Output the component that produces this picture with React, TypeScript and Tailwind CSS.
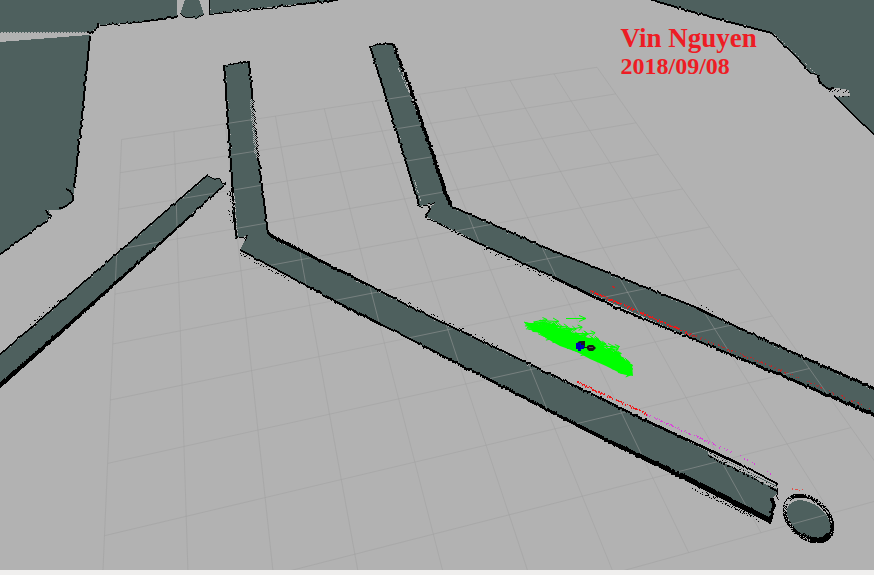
type Point = [number, number];

function makeRandom(seed: number) {
  let s = seed;
  return () => {
    s = (s * 1664525 + 1013904223) % 4294967296;
    return s / 4294967296;
  };
}

const cell = (x: number, y: number, w = 1, h = 1) => `M${x} ${y}h${w}v${h}h${-w}z`;

const poly = (points: Point[]) => points.map((p) => p.join(",")).join(" ");

/* Walks along a polyline and lays down one run of map cells per step. */
function walk(points: Point[], visit: (x: number, y: number, steep: boolean, t: number) => void) {
  const total = points.length - 1;
  for (let i = 0; i < total; i++) {
    const [x0, y0] = points[i];
    const [x1, y1] = points[i + 1];
    const steep = Math.abs(y1 - y0) > Math.abs(x1 - x0);
    const n = Math.max(1, Math.round(Math.max(Math.abs(x1 - x0), Math.abs(y1 - y0))));
    for (let k = 0; k <= n; k++) {
      const t = k / n;
      visit(Math.round(x0 + (x1 - x0) * t), Math.round(y0 + (y1 - y0) * t), steep, (i + t) / total);
    }
  }
}

type Edge = { points: Point[]; from: number; to?: number; speckle?: number; side?: number };

const edges: Edge[] = [
  { points: [[209, 0], [209, 14]], from: 1 },
  { points: [[209, 14], [337, 0]], from: 1, to: 2 },
  { points: [[100, 25], [138, 22], [177, 17]], from: 1, to: 2 },
  { points: [[98, 23], [98, 27], [92, 32], [87, 32]], from: 2 },
  { points: [[180, 14], [186, 17], [197, 17], [203, 14]], from: 1 },
  { points: [[90, 36], [82, 115], [74, 187]], from: 2 },
  { points: [[66, 189], [70, 191], [73, 195], [73, 200], [67, 205], [59, 209]], from: 2 },
  { points: [[46, 210], [48, 214], [51, 216]], from: 2 },
  { points: [[51, 217], [0, 254]], from: 2 },
  { points: [[207, 175], [212, 178], [219, 178], [221, 182], [225, 184]], from: 1 },
  { points: [[207, 175], [117, 253], [0, 354]], from: 2 },
  { points: [[225, 184], [115, 283], [0, 385]], from: 2, to: 6 },
  { points: [[61, 301], [28, 329]], from: 1, speckle: 0.4, side: -1 },
  { points: [[224, 65], [236, 63], [249, 62]], from: 1, to: 2 },
  { points: [[224, 65], [230, 150], [236, 237]], from: 2 },
  { points: [[231, 188], [233, 222]], from: 1, speckle: 0.35, side: -1 },
  { points: [[249, 62], [258, 155], [268, 233]], from: 2 },
  { points: [[235, 237], [243, 237], [247, 235], [245, 240]], from: 1 },
  { points: [[268, 234], [330, 265], [397, 300]], from: 4, to: 2 },
  { points: [[397, 300], [443, 323], [500, 350]], from: 2, speckle: 0.35, side: -1 },
  { points: [[500, 350], [527, 363], [600, 398], [645, 420], [740, 464]], from: 2, to: 3 },
  { points: [[740, 464], [777, 484]], from: 2 },
  { points: [[240, 250], [290, 277]], from: 2, speckle: 0.4, side: 1 },
  { points: [[290, 277], [335, 301], [380, 324]], from: 2, to: 3 },
  { points: [[380, 324], [500, 385], [600, 437]], from: 2, to: 4 },
  { points: [[600, 437], [655, 463], [692, 481]], from: 4, to: 6 },
  { points: [[692, 481], [735, 503], [769, 520]], from: 6, to: 6, speckle: 0.35, side: 1 },
  { points: [[776, 484], [777, 489], [777, 499]], from: 1 },
  { points: [[772, 498], [773, 504], [772, 513], [769, 523]], from: 4, to: 3 },
  { points: [[370, 46], [380, 44], [392, 44]], from: 1, to: 2 },
  { points: [[370, 46], [396, 129], [419, 205]], from: 2 },
  { points: [[393, 44], [411, 91], [450, 204]], from: 3, to: 4 },
  { points: [[419, 206], [425, 205], [434, 203]], from: 1 },
  { points: [[429, 206], [430, 209], [425, 216]], from: 2 },
  { points: [[450, 206], [553, 251], [697, 308]], from: 2 },
  { points: [[697, 308], [712, 315]], from: 3, speckle: 0.3, side: -1 },
  { points: [[712, 315], [730, 324], [805, 358], [874, 388]], from: 2, to: 3 },
  { points: [[425, 217], [480, 244]], from: 1, to: 2 },
  { points: [[480, 244], [553, 277]], from: 2, speckle: 0.3, side: 1 },
  { points: [[553, 277], [620, 309], [680, 334]], from: 3, to: 2 },
  { points: [[680, 334], [784, 376], [874, 415]], from: 2, to: 4 },
  { points: [[651, 0], [710, 17], [771, 33]], from: 2 },
  { points: [[771, 33], [800, 61], [811, 73]], from: 2 },
  { points: [[811, 73], [819, 75]], from: 1 },
  { points: [[818, 76], [820, 83], [828, 89], [833, 88]], from: 2 },
  { points: [[834, 96], [852, 114], [874, 135]], from: 2 },
];

function buildEdges() {
  const rnd = makeRandom(17);
  let black = "";
  let light = "";
  for (const e of edges) {
    let offset = 0;
    let count = 0;
    walk(e.points, (x, y, steep, t) => {
      if (count++ % 2 === 0) offset = rnd() < 0.82 ? 0 : rnd() < 0.5 ? -1 : 1;
      const size = Math.max(1, Math.round(e.from + ((e.to ?? e.from) - e.from) * t + (rnd() - 0.5) * 0.9));
      const start = offset - Math.floor(size / 2);
      black += steep ? cell(x + start, y, size, 1) : cell(x, y + start, 1, size);
      if (e.speckle && rnd() < e.speckle) {
        const far = (e.side ?? 1) * (Math.ceil(size / 2) + 1 + Math.floor(rnd() * 3));
        black += steep ? cell(x + far, y) : cell(x, y + far);
      }
      if (rnd() < 0.05) light += steep ? cell(x + start + size, y) : cell(x, y + start + size);
    });
  }
  return { black, light };
}

/* Scattered returns beside the long walls and along the notch on the right. */
function buildSpeckle() {
  const rnd = makeRandom(5);
  let light = "";
  let black = "";
  for (let y = 99; y < 158; y++) {
    const x = 250 + Math.floor((y - 99) / 11);
    for (let k = 0; k < 5; k++) if ((k + y) % 2 === 0 && rnd() < 0.85) light += cell(x + k, y);
  }
  walk([[232, 190], [236, 234]], (x, y) => {
    if (rnd() < 0.6) light += cell(x + 1, y);
  });
  walk([[396, 68], [410, 100]], (x, y) => {
    if (rnd() < 0.5) light += cell(x + 2, y);
  });
  walk([[412, 180], [418, 200]], (x, y) => {
    if (rnd() < 0.6) light += cell(x + 2, y);
  });
  walk([[708, 452], [740, 468], [776, 487]], (x, y) => {
    light += cell(x, y, 1, rnd() < 0.5 ? 2 : 3);
    if (rnd() < 0.4) black += cell(x, y + Math.floor(rnd() * 3));
    if (rnd() < 0.7) black += cell(x, y + 3, 1, rnd() < 0.5 ? 1 : 2);
  });
  walk([[692, 488], [712, 497], [752, 515]], (x, y) => {
    if (rnd() < 0.55) black += cell(x, y + Math.floor(rnd() * 2));
  });
  walk([[828, 89], [838, 89], [849, 91]], (x, y) => {
    if (rnd() < 0.45) black += cell(x, y + Math.floor(rnd() * 3));
  });
  walk([[838, 96], [849, 96]], (x, y) => {
    if (rnd() < 0.5) black += cell(x, y);
  });
  walk([[772, 34], [798, 58], [812, 72]], (x, y) => {
    if (rnd() < 0.3) light += cell(x + 2, y);
  });
  return { light, black };
}

/* Ring of returns around the round pillar; the upper side is sparse. */
function buildPillar() {
  const rnd = makeRandom(23);
  let black = "";
  const cos = Math.cos((42 * Math.PI) / 180);
  const sin = Math.sin((42 * Math.PI) / 180);
  const spot = (r: number, inset: number) => {
    const u = Math.cos(r) * (29 - inset);
    const v = Math.sin(r) * (20 - inset);
    return cell(Math.round(808 + u * cos - v * sin), Math.round(518 + u * sin + v * cos));
  };
  for (let a = 0; a < 360; a++) {
    const r = (a * Math.PI) / 180;
    const solid = a < 55 || a > 352 || (a > 192 && a < 225);
    const loose = (a >= 55 && a < 140) || (a >= 225 && a <= 352);
    const layers = a > 352 || a < 75 ? 6 : 4;
    for (let k = 0; k < layers; k++) {
      const chance = solid ? 0.85 : loose ? 0.5 : k === 0 ? 0.35 : 0.08;
      if (rnd() < chance) black += spot(r, k);
    }
  }
  return black;
}

/* Projects a 10 x 10 ground grid through the camera's homography. */
function buildGrid() {
  const [x0, y0] = [121.6, 139.5];
  const [x1, y1] = [597, 67.3];
  const [x2, y2] = [809.3, 368.5];
  const [x3, y3] = [104.5, 535.7];
  const dx1 = x1 - x2, dx2 = x3 - x2, sx = x0 - x1 + x2 - x3;
  const dy1 = y1 - y2, dy2 = y3 - y2, sy = y0 - y1 + y2 - y3;
  const det = dx1 * dy2 - dx2 * dy1;
  const g = (sx * dy2 - dx2 * sy) / det;
  const h = (dx1 * sy - sx * dy1) / det;
  const at = (i: number, j: number) => {
    const u = i / 10, v = j / 8;
    const w = g * u + h * v + 1;
    const x = ((x1 - x0 + g * x1) * u + (x3 - x0 + h * x3) * v + x0) / w;
    const y = ((y1 - y0 + g * y1) * u + (y3 - y0 + h * y3) * v + y0) / w;
    return `${x.toFixed(1)} ${y.toFixed(1)}`;
  };
  let d = "";
  for (let i = 0; i <= 10; i++) d += `M${at(i, 0)}L${at(i, 10)}M${at(0, i)}L${at(10, i)}`;
  return d;
}

/* Laser returns thin out with distance along each beam path. */
function buildScan(points: Point[], seed: number, start: number, end: number) {
  const rnd = makeRandom(seed);
  let d = "";
  walk(points, (x, y, _steep, t) => {
    if (rnd() < start + (end - start) * t) d += cell(x, y + Math.floor(rnd() * 2), 1, rnd() < start * 0.6 ? 2 : 1);
  });
  return d;
}

/* Pose arrows scattered around the cloud's long axis. */
function buildParticles() {
  const rnd = makeRandom(41);
  const axis: Point[] = [[523, 324], [545, 330], [575, 342], [600, 353], [619, 369]];
  let d = "";
  for (let k = 0; k < 170; k++) {
    const t = rnd() * 0.999 * (axis.length - 1);
    const i = Math.floor(t);
    const f = t - i;
    const spread = 3 + 16 * Math.sin(((t + 0.4) / axis.length) * Math.PI);
    const x = axis[i][0] + (axis[i + 1][0] - axis[i][0]) * f;
    const y = axis[i][1] + (axis[i + 1][1] - axis[i][1]) * f + (rnd() - 0.5) * spread;
    const len = 12 + rnd() * 4;
    const ang = (rnd() - 0.35) * 0.6;
    const ex = x + Math.cos(ang) * len;
    const ey = y + Math.sin(ang) * len;
    const head = (turn: number) =>
      `M${ex.toFixed(1)} ${ey.toFixed(1)}L${(ex - 5 * Math.cos(ang + turn)).toFixed(1)} ${(ey - 5 * Math.sin(ang + turn)).toFixed(1)}`;
    d += `M${x.toFixed(1)} ${y.toFixed(1)}L${ex.toFixed(1)} ${ey.toFixed(1)}${head(0.6)}${head(-0.6)}`;
  }
  return d;
}

const unknownAreas: Point[][] = [
  [[0, 0], [177, 0], [177, 17], [138, 22], [100, 25], [98, 23], [97, 28], [91, 32], [0, 32]],
  [[0, 42], [88, 35], [91, 36], [82, 115], [74, 187], [73, 201], [67, 206], [60, 210], [49, 210], [51, 217], [0, 254]],
  [[185, 0], [199, 0], [204, 14], [198, 18], [186, 17], [180, 14]],
  [[209, 0], [337, 0], [289, 5], [209, 14]],
  [[650, 0], [874, 0], [874, 135], [839, 100], [836, 97], [850, 96], [849, 90], [837, 88], [827, 89], [820, 84], [818, 76], [811, 73], [771, 32]],
  [[207, 175], [212, 178], [219, 178], [221, 182], [225, 184], [115, 283], [0, 387], [0, 354], [117, 253]],
  [[224, 65], [249, 62], [258, 155], [268, 234], [397, 300], [443, 323], [527, 363], [645, 420], [777, 486], [777, 493], [771, 500], [773, 505], [769, 523], [600, 437], [380, 324], [335, 301], [240, 250], [247, 236], [235, 238]],
  [[369, 46], [392, 44], [409, 91], [450, 205], [553, 250], [697, 308], [805, 358], [874, 388], [874, 415], [784, 376], [680, 333], [553, 277], [480, 243], [425, 216], [431, 207], [434, 203], [419, 206]],
];

const edgeCells = buildEdges();
const speckle = buildSpeckle();
const pillar = buildPillar();
const grid = buildGrid();
const particles = buildParticles();
const upperScan = buildScan([[590, 290], [635, 309], [690, 333]], 3, 1, 0.75);
const upperScanFar = buildScan([[690, 333], [780, 369], [874, 409]], 9, 0.5, 0.2);
const lowerScan = buildScan([[577, 381], [612, 397], [647, 413]], 12, 1, 0.65);
const magentaScan = buildScan([[647, 414], [700, 437], [740, 455], [776, 476]], 31, 0.6, 0.25);
const pillarScan = buildScan([[792, 488], [808, 490]], 8, 0.7, 0.4);

function MapView() {
  return (
    <svg
      className="block h-full w-full"
      viewBox="0 0 874 570"
      preserveAspectRatio="xMidYMid slice"
      role="img"
      aria-label="Robot localization map"
    >
      <g fill="#4e605e" shapeRendering="crispEdges">
        {unknownAreas.map((points, i) => (
          <polygon key={i} points={poly(points)} />
        ))}
        <ellipse cx="809" cy="520" rx="25" ry="16" transform="rotate(37 809 520)" />
      </g>
      <path d="M0 32.5H88" stroke="#4e605e" strokeDasharray="1 2" shapeRendering="crispEdges" />
      <path d={grid} fill="none" stroke="#a0a0a0" strokeOpacity="0.5" />
      <g shapeRendering="crispEdges">
        <path d={edgeCells.black} fill="#000" />
        <path d={edgeCells.light + speckle.light} fill="#b2b2b2" />
        <path d={speckle.black + pillar} fill="#000" />
        <path d={upperScan + lowerScan} fill="#f01818" />
        <path d={upperScanFar} fill="#b52c2c" />
        <path d={pillarScan} fill="#e0504a" />
        <path d={magentaScan} fill="#d946d9" />
        <path d="M612 286h2v1h1v1h-2v-1h-1z" fill="#d02020" />
      </g>
      <path
        d="M525 325L545 325L560 328L574 333L590 339L603 347L620 357L632 365L633 376L622 374L606 366L590 359L577 352L560 346L551 341L540 333Z"
        fill="#00ff00"
      />
      <path d={particles} fill="none" stroke="#00ff00" />
      <path
        d="M539 320.5L558 321.5M553 318L559 321.5L552 324M566 318.5H586M579 315.5L586 318.5L579 321.5M598 346.5H615M608 343.5L614 346.5L608 349.5"
        fill="none"
        stroke="#00ff00"
      />
      <g>
        <circle cx="581" cy="345" r="4" fill="#111820" />
        <path d="M576 343h5v2h3v4h-3v2h-3v-2h-2z" fill="#0000b8" />
        <path d="M582 341h3v4h-3z" fill="#171717" />
        <path d="M584 347.5h4" stroke="#171717" strokeWidth="1" />
        <path d="M587 346l2-1h4l3 3l-3 3h-4l-2-2z" fill="#171717" />
        <path d="M589 347.5h4" stroke="#555" />
      </g>
    </svg>
  );
}

export default function App() {
  return (
    <div className="flex h-screen flex-col bg-[#f0efee]">
      <main className="relative min-h-0 flex-1 overflow-hidden bg-[#b2b2b2]">
        <MapView />
        <div className="absolute top-6 left-[71%] font-['Palatino_Linotype','Book_Antiqua','Liberation_Serif',serif] font-bold text-[#ed1c24]">
          <p className="text-[27px] leading-7">Vin Nguyen</p>
          <p className="text-2xl leading-7">2018/09/08</p>
        </div>
      </main>
      <footer className="h-[5px] shrink-0 bg-[#f0efee]" />
    </div>
  );
}
